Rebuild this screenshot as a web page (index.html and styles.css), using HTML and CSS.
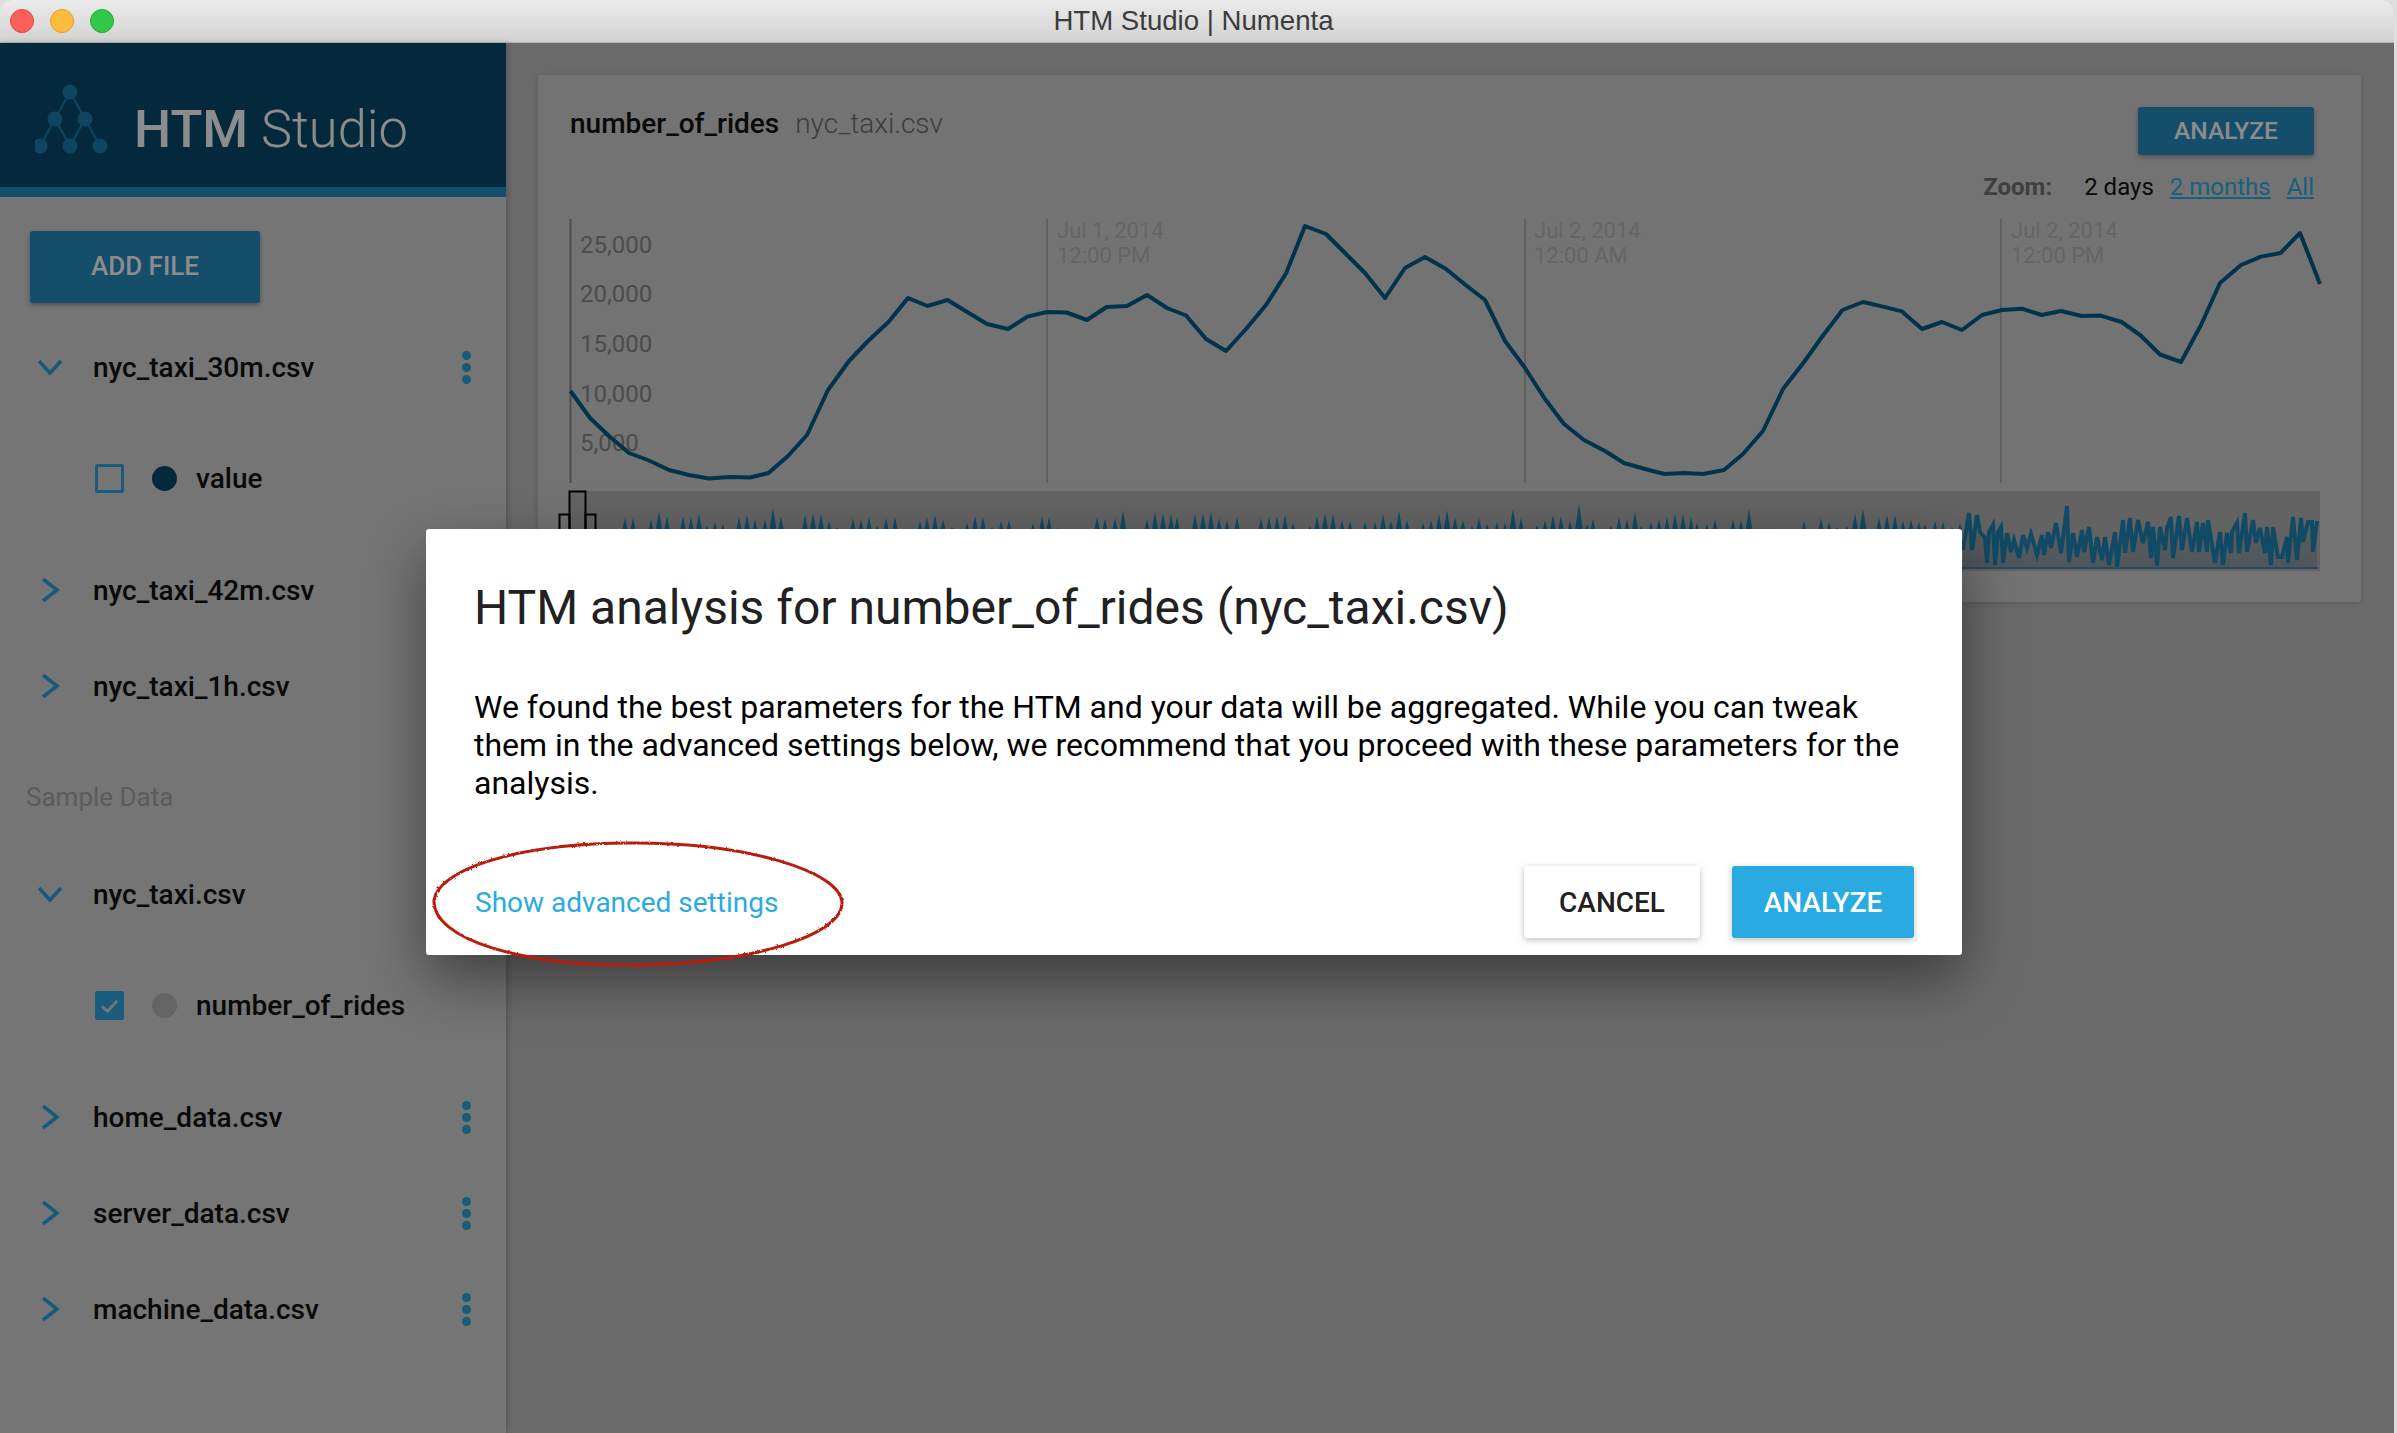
FILE: index.html
```html
<!DOCTYPE html>
<html lang="en">
<head>
  <meta charset="UTF-8" />
  <title>HTM Studio | Numenta</title>
  <link rel="stylesheet" href="styles.css">
</head>
<body>
<div class="window">

  <!-- window title bar -->
  <header class="titlebar">
    <div class="lights">
      <span class="light red"></span>
      <span class="light yellow"></span>
      <span class="light green"></span>
    </div>
    <span class="window-title">HTM Studio | Numenta</span>
  </header>

  <div class="app">

    <!-- SIDEBAR -->
    <aside class="sidebar">
      <div class="brand">
        <svg class="logo" viewBox="0 0 80 72">
          <path class="logo-lines" d="M35 8 L20 35 L5 62 M35 8 L50 35 L65 62 M20 35 L35 62 M50 35 L35 62" />
          <circle cx="35" cy="8" r="7.5" />
          <circle cx="20" cy="35" r="7.5" />
          <circle cx="50" cy="35" r="7.5" />
          <circle cx="5" cy="62" r="7.5" />
          <circle cx="35" cy="62" r="7.5" />
          <circle cx="65" cy="62" r="7.5" />
        </svg>
        <span class="brand-name"><b>HTM</b> Studio</span>
      </div>

      <button class="add-file">ADD FILE</button>

      <div class="row">
        <svg class="chevron" viewBox="0 0 24 24"><path d="M1 6 L12 18 L23 6" /></svg>
        <span class="file-name">nyc_taxi_30m.csv</span>
        <span class="dots"><i></i><i></i><i></i></span>
      </div>
      <div class="row child">
        <span class="check"></span>
        <span class="series-dot navy"></span>
        <span class="file-name">value</span>
      </div>
      <div class="row">
        <svg class="chevron" viewBox="0 0 24 24"><path d="M5 1 L19 12 L5 23" /></svg>
        <span class="file-name">nyc_taxi_42m.csv</span>
      </div>
      <div class="row">
        <svg class="chevron" viewBox="0 0 24 24"><path d="M5 1 L19 12 L5 23" /></svg>
        <span class="file-name">nyc_taxi_1h.csv</span>
      </div>

      <div class="sample-title">Sample Data</div>

      <div class="row">
        <svg class="chevron" viewBox="0 0 24 24"><path d="M1 6 L12 18 L23 6" /></svg>
        <span class="file-name">nyc_taxi.csv</span>
      </div>
      <div class="row child">
        <span class="check checked">
          <svg viewBox="0 0 24 24"><path d="M4 13 L10 18 L20 7" /></svg>
        </span>
        <span class="series-dot grey"></span>
        <span class="file-name">number_of_rides</span>
      </div>
      <div class="row">
        <svg class="chevron" viewBox="0 0 24 24"><path d="M5 1 L19 12 L5 23" /></svg>
        <span class="file-name">home_data.csv</span>
        <span class="dots"><i></i><i></i><i></i></span>
      </div>
      <div class="row">
        <svg class="chevron" viewBox="0 0 24 24"><path d="M5 1 L19 12 L5 23" /></svg>
        <span class="file-name">server_data.csv</span>
        <span class="dots"><i></i><i></i><i></i></span>
      </div>
      <div class="row">
        <svg class="chevron" viewBox="0 0 24 24"><path d="M5 1 L19 12 L5 23" /></svg>
        <span class="file-name">machine_data.csv</span>
        <span class="dots"><i></i><i></i><i></i></span>
      </div>
    </aside>

    <!-- CHART CARD -->
    <main class="content">
      <section class="card">
        <div class="card-head">
          <div class="card-title"><b>number_of_rides</b> <span>nyc_taxi.csv</span></div>
          <button class="btn-analyze-dim">ANALYZE</button>
        </div>
        <div class="zoom-bar">
          <b>Zoom:</b>
          <span class="zoom-current">2 days</span>
          <a href="#">2 months</a>
          <a href="#">All</a>
        </div>
        <svg class="chart" viewBox="555 215 1770 360">
          <defs>
            <linearGradient id="areaFade" x1="0" y1="0" x2="0" y2="1">
              <stop offset="0" stop-color="#b4b4b4" />
              <stop offset="1" stop-color="#8f9ca5" />
            </linearGradient>
          </defs>

          <line class="axis" x1="570.5" y1="219" x2="570.5" y2="483" />
          <line class="grid" x1="1047" y1="219" x2="1047" y2="483" />
          <line class="grid" x1="1525" y1="219" x2="1525" y2="483" />
          <line class="grid" x1="2001" y1="219" x2="2001" y2="483" />

          <text class="y-label" x="580" y="253">25,000</text>
          <text class="y-label" x="580" y="302">20,000</text>
          <text class="y-label" x="580" y="352">15,000</text>
          <text class="y-label" x="580" y="402">10,000</text>
          <text class="y-label" x="580" y="451">5,000</text>

          <text class="date-label" x="1057" y="238">Jul 1, 2014</text>
          <text class="date-label" x="1057" y="263">12:00 PM</text>
          <text class="date-label" x="1534" y="238">Jul 2, 2014</text>
          <text class="date-label" x="1534" y="263">12:00 AM</text>
          <text class="date-label" x="2011" y="238">Jul 2, 2014</text>
          <text class="date-label" x="2011" y="263">12:00 PM</text>

          <polyline class="series" points="570.5,391 590,418 609,436 629,453 649,460.5 669,470 689,475 709,478.5 729.5,477 750,477.5 768.5,473 788,456 807,435 828,390 849,361 868,341 888.5,322 908,298 927.5,306 947.6,300 968,312.5 987,324 1008,329 1027.4,316.6 1047,312 1066.5,312.5 1087,320 1106.6,307 1127,306 1147,295 1167,308 1186,315.5 1206,339 1226,351 1246,329 1266,305 1286,273.5 1305,226 1326,234 1345,253 1365,273 1385,298 1405,268 1425,257 1446,269 1465,284.5 1485,300 1505,341 1524,366.5 1545,399 1564,424 1584,440 1605,451 1624,463 1645,469 1664.5,474 1684,473 1703,474 1724,470 1743,454 1763,431 1783,389 1804,362 1823,335.5 1842.5,310 1863,302 1883,306.6 1902,311.4 1922,329 1942,322 1962,330 1982,315 2002,310 2022,308.7 2041.5,315 2061,311 2081.6,316 2100.7,315.6 2121.6,322 2140.7,335.5 2160,354.5 2181,362 2201,325 2220,283 2241,265 2261,256.6 2280.6,253 2300,233 2320,284" />

          <!-- range navigator -->
          <rect class="nav-band" x="570" y="491" width="1750" height="80" />
          <path id="navSpikes" class="nav-spikes" />
          <path id="navArea" class="nav-area" />
          <path id="navLine" class="nav-line" />
          <line class="nav-base" x1="1960" y1="568" x2="2318" y2="568" />
          <rect class="nav-handle" x="569.5" y="491.5" width="16" height="50" />
          <rect class="nav-handle" x="559.5" y="514.5" width="10" height="30" />
          <rect class="nav-handle" x="585.5" y="514.5" width="10" height="30" />
        </svg>
      </section>
    </main>

    <!-- dim layer + dialog -->
    <div class="overlay">
      <div class="dialog">
        <h2>HTM analysis for number_of_rides (nyc_taxi.csv)</h2>
        <p>We found the best parameters for the HTM and your data will be aggregated. While you can tweak them in the advanced settings below, we recommend that you proceed with these parameters for the analysis.</p>
        <div class="dialog-foot">
          <a class="advanced" href="#">Show advanced settings</a>
          <div class="dialog-btns">
            <button class="btn-cancel">CANCEL</button>
            <button class="btn-analyze">ANALYZE</button>
          </div>
        </div>
        <svg class="circled" viewBox="0 0 420 132">
          <defs>
            <filter id="rough" x="-5%" y="-10%" width="110%" height="120%">
              <feTurbulence type="fractalNoise" baseFrequency="0.35" numOctaves="2" seed="4" />
              <feDisplacementMap in="SourceGraphic" scale="2.5" />
            </filter>
          </defs>
          <path filter="url(#rough)" d="M6 62 C10 34 80 6 200 5 C320 4 412 34 414 64 C416 98 320 126 206 127 C96 128 4 102 6 62 Z" />
        </svg>
      </div>
    </div>
  </div>
</div>

  <script src="script.js"></script>
</body>
</html>
```

FILE: styles.css
```css
* {
  box-sizing: border-box;
}
body {
  margin: 0;
  width: 2397px;
  height: 1433px;
  overflow: hidden;
  font-family: Roboto, sans-serif;
  background-color: #dedede;
}
button {
  font-family: Roboto, sans-serif;
  border: none;
  border-radius: 3px;
  font-weight: 500;
}
.window {
  width: 2394px;
  height: 1433px;
  overflow: hidden;
  border-radius: 12px 12px 0 0;
  background-color: #c4c4c4;
}

/* title bar */
.titlebar {
  height: 43px;
  padding-right: 7px;
  display: flex;
  align-items: center;
  justify-content: center;
  position: relative;
  background: linear-gradient(#ebebeb, #d2d2d2);
  border-bottom: 1px solid #b4b4b4;
}
.lights {
  position: absolute;
  left: 10px;
  top: 9px;
  display: flex;
  gap: 16px;
}
.light {
  width: 24px;
  height: 24px;
  border-radius: 50%;
}
.red { background-color: #fc605c; border: 1px solid #e2473f; }
.yellow { background-color: #fdbc40; border: 1px solid #dfa023; }
.green { background-color: #34c84a; border: 1px solid #26a934; }
.window-title {
  font-family: "Liberation Sans", Arial, sans-serif;
  font-size: 27.6px;
  color: #3c3c3c;
}

.app {
  display: flex;
  height: 1390px;
  position: relative;
}

/* sidebar */
.sidebar {
  width: 506px;
  flex-shrink: 0;
  background-color: #d5d5d5;
  box-shadow: 2px 0 6px rgba(0, 0, 0, 0.2);
  position: relative;
}
.brand {
  height: 154px;
  padding: 41px 0 0 35px;
  display: flex;
  gap: 19px;
  background-color: #094b6f;
  border-bottom: 10px solid #268ec3;
}
.logo {
  width: 80px;
  height: 72px;
  flex-shrink: 0;
  fill: #1c7fb0;
}
.logo-lines {
  fill: none;
  stroke: #1c7fb0;
  stroke-width: 2;
}
.brand-name {
  margin-top: 9px;
  font-size: 52.4px;
  font-weight: 300;
  line-height: 72px;
  color: #fff;
}
.brand-name b {
  font-weight: 500;
}
.add-file {
  display: block;
  width: 230px;
  height: 72px;
  margin: 34px 0 16px 30px;
  padding-bottom: 3px;
  background-color: #268ec3;
  color: #fff;
  font-size: 26px;
  box-shadow: 0 2px 5px rgba(0, 0, 0, 0.3);
}
.row {
  height: 96px;
  padding: 0 0 0 38px;
  display: flex;
  align-items: center;
  position: relative;
}
.row.child {
  padding-left: 95px;
  margin: 15px 0 16px;
}
.chevron {
  width: 24px;
  height: 24px;
  margin-right: 31px;
  fill: none;
  stroke: #2aa6dc;
  stroke-width: 3.6;
}
.file-name {
  font-size: 28px;
  font-weight: 500;
  color: #111;
}
.dots {
  position: absolute;
  left: 462px;
  top: 32px;
  display: flex;
  flex-direction: column;
  gap: 3px;
}
.dots i {
  width: 9px;
  height: 9px;
  border-radius: 50%;
  background-color: #2aa6dc;
}
.check {
  width: 29px;
  height: 29px;
  margin-right: 28px;
  border: 3px solid #2fa8e4;
  border-radius: 2px;
}
.check.checked {
  background-color: #2fa8e4;
}
.check svg {
  display: block;
  fill: none;
  stroke: #d5d5d5;
  stroke-width: 3;
}
.series-dot {
  width: 25px;
  height: 25px;
  border-radius: 50%;
  margin-right: 19px;
}
.navy { background-color: #094b6f; }
.grey { background-color: #b6b6b6; }
.sample-title {
  height: 97px;
  margin-top: 15px;
  padding-left: 26px;
  line-height: 96px;
  font-size: 26px;
  color: #a7a7a7;
}

/* chart card */
.content {
  flex: 1;
  min-width: 0;
  padding: 32px 33px 0 32px;
}
.card {
  height: 527px;
  padding: 32px 47px 0 32px;
  background-color: #d2d2d2;
  border-radius: 3px;
  box-shadow: 0 1px 6px rgba(0, 0, 0, 0.2);
}
.card-head {
  display: flex;
  justify-content: space-between;
  align-items: flex-start;
  height: 48px;
}
.card-title {
  font-size: 28px;
  line-height: 34px;
}
.card-title b {
  font-weight: 500;
  color: #111;
}
.card-title span {
  font-weight: 300;
  color: #707070;
  margin-left: 9px;
}
.btn-analyze-dim {
  width: 176px;
  height: 48px;
  padding-bottom: 2px;
  background-color: #268ec3;
  color: #fff;
  font-size: 24.5px;
  box-shadow: 0 2px 5px rgba(0, 0, 0, 0.3);
}
.zoom-bar {
  margin-top: 17px;
  height: 30px;
  display: flex;
  justify-content: flex-end;
  align-items: center;
  font-size: 24px;
}
.zoom-bar b {
  font-weight: 700;
  color: #747474;
  margin-right: 32px;
}
.zoom-current {
  color: #111;
  margin-right: 16px;
}
.zoom-bar a {
  color: #30aee6;
  margin-left: 16px;
}
.zoom-current + a {
  margin-left: 0;
}
.chart {
  display: block;
  width: 1770px;
  height: 360px;
  margin: 13px 0 0 -15px;
}
.axis {
  stroke: #8a8a8a;
  stroke-width: 2;
}
.grid {
  stroke: #b0b0b0;
  stroke-width: 2;
}
.y-label {
  font-size: 24px;
  fill: #8a8a8a;
}
.date-label {
  font-size: 22px;
  fill: #b8b8b8;
}
.series {
  fill: none;
  stroke: #055d8c;
  stroke-width: 4;
  stroke-linejoin: round;
}
.nav-band {
  fill: #b4b4b4;
}
.nav-spikes {
  fill: #1f88b6;
}
.nav-area {
  fill: url(#areaFade);
}
.nav-line {
  fill: none;
  stroke: #1f88b6;
  stroke-width: 4;
}
.nav-base {
  stroke: #4d8fb0;
  stroke-width: 2;
}
.nav-handle {
  fill: none;
  stroke: #000;
  stroke-width: 2;
}

/* dialog */
.overlay {
  position: absolute;
  inset: 0;
  padding: 486px 0 0 426px;
  background-color: rgba(0, 0, 0, 0.45);
}
.dialog {
  width: 1536px;
  height: 426px;
  padding: 50px 48px 0;
  position: relative;
  background-color: #fff;
  border-radius: 3px;
  box-shadow: 0 24px 60px rgba(0, 0, 0, 0.45);
}
.dialog h2 {
  margin: 0;
  font-size: 48px;
  font-weight: 400;
  line-height: 58px;
  color: #212121;
}
.dialog p {
  margin: 51px 0 0;
  font-size: 32px;
  line-height: 38px;
  color: #000;
}
.dialog-foot {
  margin-top: 64px;
  display: flex;
  justify-content: space-between;
  align-items: center;
}
.advanced {
  margin-left: 1px;
  font-size: 28px;
  color: #29abe2;
  text-decoration: none;
}
.dialog-btns {
  display: flex;
  gap: 32px;
}
.dialog-btns button {
  height: 72px;
  font-size: 28px;
  box-shadow: 0 2px 6px rgba(0, 0, 0, 0.25);
}
.btn-cancel {
  width: 176px;
  background-color: #fff;
  color: #212121;
}
.btn-analyze {
  width: 182px;
  background-color: #29abe2;
  color: #fff;
}
.circled {
  position: absolute;
  left: 2px;
  top: 309px;
  width: 420px;
  height: 132px;
  fill: none;
  stroke: #b81e10;
  stroke-width: 3;
  overflow: visible;
}
```

FILE: script.js
```js
// navigator data read off the overview: [x, height] of each spike above the dialog
const spikes = [
  [625,11],[633,11],[651,10],[659,18],[667,13],[683,13],[691,12],[699,15],[707,3],[715,7],[723,5],[739,12],
  [747,14],[755,10],[765,10],[773,21],[781,13],[805,14],[813,16],[821,15],[829,8],[837,2],[853,11],[861,10],
  [869,12],[877,3],[886,11],[895,12],[920,8],[927,12],[935,14],[943,10],[952,2],[967,6],[975,13],[983,12],
  [992,2],[1001,8],[1009,9],[1033,6],[1042,13],[1049,12],[1058,1],[1097,12],[1105,10],[1115,11],[1123,19],
  [1130,1],[1147,10],[1155,17],[1163,16],[1171,15],[1177,12],[1195,15],[1203,16],[1211,17],[1219,11],[1227,9],
  [1237,12],[1261,11],[1269,12],[1277,13],[1285,14],[1293,6],[1310,3],[1317,13],[1325,16],[1333,15],[1342,9],
  [1350,8],[1365,7],[1375,7],[1383,15],[1391,8],[1399,18],[1407,9],[1423,6],[1431,9],[1439,15],[1447,19],
  [1455,12],[1463,9],[1472,3],[1479,11],[1487,5],[1497,7],[1505,6],[1513,20],[1521,11],[1537,4],[1545,9],
  [1553,14],[1561,13],[1570,8],[1579,25],[1587,5],[1593,10],[1611,3],[1619,12],[1627,10],[1635,17],[1641,3],
  [1651,7],[1659,10],[1667,12],[1675,15],[1683,15],[1691,12],[1697,6],[1707,5],[1715,10],[1733,10],[1741,9],
  [1749,20],[1765,1],[1773,1],[1804,8],[1821,11],[1829,7],[1837,2],[1847,3],[1855,16],[1863,20],[1879,11],
  [1887,14],[1895,14],[1903,8],[1911,10],[1919,7],[1925,5],[1935,8],[1943,7],[1952,2],[1960,6]
];

const linePoints = [
  [1963,550],[1969,513],[1972,550],[1977,515],[1980,532],[1985,538],[1987,563],[1989,532],[1993,525],[1995,565],
  [1998,532],[2001,527],[2003,563],[2007,533],[2011,552],[2014,540],[2019,558],[2023,535],[2027,548],[2031,534],
  [2037,555],[2042,535],[2044,555],[2048,532],[2051,548],[2056,523],[2061,553],[2067,506],[2069,562],[2073,533],
  [2077,557],[2082,530],[2084,552],[2089,527],[2093,563],[2097,537],[2102,560],[2105,537],[2109,565],[2115,532],
  [2117,567],[2123,520],[2125,553],[2130,518],[2133,552],[2138,520],[2143,543],[2148,522],[2151,558],[2153,527],
  [2157,566],[2160,527],[2165,550],[2167,528],[2171,517],[2173,558],[2179,516],[2182,550],[2187,518],[2192,552],
  [2197,522],[2199,552],[2203,523],[2207,552],[2208,520],[2215,563],[2220,532],[2223,565],[2227,533],[2231,553],
  [2232,532],[2237,523],[2239,553],[2245,513],[2247,552],[2253,520],[2256,543],[2260,528],[2265,553],[2267,527],
  [2271,565],[2273,527],[2278,557],[2282,557],[2287,537],[2288,563],[2293,517],[2297,560],[2301,518],[2303,542],
  [2308,522],[2312,522],[2313,552],[2317,521]
];

const spikePath = spikes
  .map(([x, h]) => {
    const half = 1.5 + h * 0.1;
    return `M${x - half} 530L${x} ${529 - h}L${x + half} 530Z`;
  })
  .join("");
document.getElementById("navSpikes").setAttribute("d", spikePath);

const linePath = linePoints.map(([x, y], i) => `${i ? "L" : "M"}${x} ${y}`).join("");
document.getElementById("navLine").setAttribute("d", linePath);
document.getElementById("navArea").setAttribute("d", `${linePath}L2317 568L1963 568Z`);
```
